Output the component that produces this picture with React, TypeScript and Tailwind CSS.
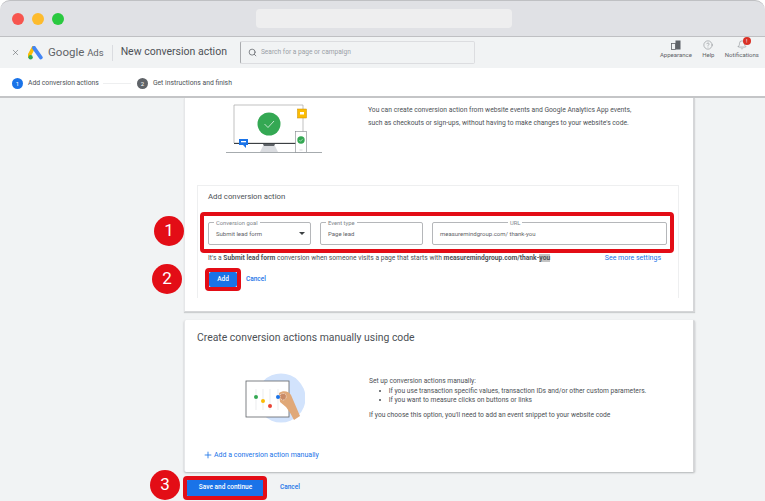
import React from 'react';
import { Search, X, CircleHelp, Bell, Plus } from 'lucide-react';

const font = { fontFamily: 'Roboto, sans-serif' };

function Marker({ n, className }: { n: number; className: string }) {
  return (
    <div className={`absolute flex h-[30px] w-[30px] items-center justify-center rounded-full bg-[#e30d16] text-[17px] text-white ${className}`}>
      {n}
    </div>
  );
}

function Field({ label, value, className, labelClass, caret }: { label: string; value: string; className: string; labelClass: string; caret?: boolean }) {
  return (
    <div className={`relative flex h-[23px] items-center rounded-[2px] border border-[#b5b7ba] pl-[7px] text-[6px] text-[#5f6368] ${className}`}>
      <span className={`absolute top-[-3px] bg-white px-[2px] text-[5.800px] leading-[6px] text-[#80868b] ${labelClass}`}>{label}</span>
      {value}
      {caret && <span className="absolute right-[5px] top-[9px] h-0 w-0 border-x-[3px] border-t-[3px] border-x-transparent border-t-[#3c4043]" />}
    </div>
  );
}

function MonitorArt() {
  return (
    <svg width="100" height="50" viewBox="0 0 100 50" className="shrink-0">
      <path d="M8 1H77V39H8Z" fill="#fff" stroke="#a8a8a8" strokeWidth="0.7" />
      <path d="M8 39.500H70" stroke="#3c4043" strokeWidth="1" />
      <path d="M34 48L38 40H48L52 48Z" fill="#dadce0" />
      <path d="M37 40L38 42H48L49 40Z" fill="#5f6368" />
      <path d="M0 48.500H96" stroke="#80868b" strokeWidth="0.7" />
      <circle cx="43" cy="20" r="11.500" fill="#34a853" />
      <path d="M38.500 20L42 23.500L48 17" fill="none" stroke="#fff" strokeWidth="0.7" />
      <rect x="69.500" y="27.500" width="11" height="21" fill="#fff" stroke="#80868b" strokeWidth="0.6" />
      <circle cx="75" cy="36" r="3.700" fill="#34a853" />
      <path d="M73.300 36L74.500 37.300L76.800 34.800" fill="none" stroke="#fff" strokeWidth="0.5" />
      <path d="M73.500 46H76.500" stroke="#bdc1c6" strokeWidth="0.6" />
      <rect x="71.500" y="5" width="9" height="9" fill="#fbbc04" stroke="#c98d00" strokeWidth="0.5" />
      <rect x="74" y="8" width="4" height="2.500" fill="#fff" />
      <path d="M13 35H22V41H20V44L17 41H13Z" fill="#1a73e8" />
      <rect x="15" y="37" width="5" height="1.300" fill="#fff" />
    </svg>
  );
}

function SliderArt() {
  return (
    <svg width="60" height="52" viewBox="0 0 60 52" className="shrink-0">
      <circle cx="36" cy="25" r="24.500" fill="#d2e3fc" />
      <rect x="1" y="8" width="43" height="36" fill="#fff" stroke="#5f6368" strokeWidth="0.8" />
      <path d="M11 16V37M18 16V37M25 16V37M33 16V37" stroke="#e3e4e6" strokeWidth="0.7" />
      <path d="M34 20C38 17 44 18 46 22L55 43L49 47C46 41 44 38 41 34L35 29Z" fill="#e0a878" />
      <path d="M35 22C37 20 40 20 41 22C42 25 40 27 38 27C36 27 35 25 35 22Z" fill="#c98a66" stroke="#fff" strokeWidth="0.6" strokeDasharray="1 0.8" />
      <circle cx="11" cy="24" r="2" fill="#34a853" />
      <circle cx="18" cy="28" r="2" fill="#fbbc04" />
      <circle cx="25" cy="33" r="2" fill="#ea4335" />
      <circle cx="33" cy="24" r="2" fill="#1a73e8" />
    </svg>
  );
}

export default function App() {
  return (
    <div style={font} className="relative flex h-[501px] w-[765px] flex-col overflow-hidden bg-white">
      {/* Window chrome */}
      <div className="flex h-[37px] shrink-0 items-center rounded-t-[10px] border-y border-[#bfc0c3] bg-[#e0e1e5] pl-[12px]">
        <div className="flex gap-[8px]">
          <span className="h-[12px] w-[12px] rounded-full bg-[#f7554f]" />
          <span className="h-[12px] w-[12px] rounded-full bg-[#fdbb2d]" />
          <span className="h-[12px] w-[12px] rounded-full bg-[#2ac940]" />
        </div>
        <div className="ml-[192px] h-[19px] w-[256px] rounded-[4px] bg-[#eeeeef]" />
      </div>

      {/* Ads header */}
      <div className="flex h-[31px] shrink-0 items-center bg-[#f1f3f4] pl-[11px]">
        <X size={9} strokeWidth={1.5} className="text-[#5f6368]" />
        <svg width="15" height="14" viewBox="0 0 15 14" className="ml-[8px]">
          <path d="M5.500 1.500L1 10" stroke="#fbbc04" strokeWidth="3.600" strokeLinecap="round" />
          <path d="M6 1.800L12.800 11.500" stroke="#4285f4" strokeWidth="3.800" strokeLinecap="round" />
          <circle cx="2.600" cy="11.200" r="2.200" fill="#34a853" />
        </svg>
        <span className="ml-[5px] text-[11.500px] leading-none text-[#5f6368]">Google <span className="text-[9.500px]">Ads</span></span>
        <span className="ml-[8px] h-[16px] w-px bg-[#dadce0]" />
        <span className="ml-[8px] text-[10.500px] leading-none text-[#4d5156]">New conversion action</span>
        <div className="ml-[13px] flex h-[23px] w-[235px] shrink-0 items-center rounded-[2px] border border-[#dcdde0] border-l-[#a9abae] pl-[7px]">
          <Search size={9} className="text-[#5f6368]" />
          <span className="ml-[4px] text-[6.600px] text-[#9aa0a6]">Search for a page or campaign</span>
        </div>
        <div className="ml-[184px] mb-[6px] flex w-[100px] shrink-0 items-start justify-between text-[6px] leading-[8px] text-[#5f6368]">
          <div className="flex flex-col items-center gap-[1px] pl-[1px]">
            <svg width="10" height="10" viewBox="0 0 10 10"><rect x="0.500" y="3.500" width="4" height="6" fill="none" stroke="#5f6368" strokeWidth="0.8" /><rect x="4.500" y="0.500" width="5" height="9" fill="#5f6368" /></svg>
            Appearance
          </div>
          <div className="flex flex-col items-center gap-[1px]">
            <CircleHelp size={10} strokeWidth={1} />
            Help
          </div>
          <div className="relative flex flex-col items-center gap-[1px]">
            <Bell size={10} strokeWidth={1} />
            <span className="absolute left-[18px] top-[-3px] flex h-[8px] w-[8px] items-center justify-center rounded-full bg-[#d93025] text-[5.500px] text-white">!</span>
            Notifications
          </div>
        </div>
      </div>

      {/* Stepper */}
      <div className="flex h-[30px] shrink-0 items-center border-b-2 border-[#c4c5c7] bg-white pl-[12px] pt-[2px] text-[6.800px] text-[#4d5156]">
        <span className="flex h-[11px] w-[11px] items-center justify-center rounded-full bg-[#1a73e8] text-[6px] text-white">1</span>
        <span className="ml-[5px]">Add conversion actions</span>
        <span className="ml-[4px] h-px w-[28px] bg-[#eeeff0]" />
        <span className="ml-[6px] flex h-[11px] w-[11px] items-center justify-center rounded-full bg-[#5f6368] text-[6px] text-white">2</span>
        <span className="ml-[5px]">Get instructions and finish</span>
      </div>

      {/* Page body */}
      <div className="flex flex-1 flex-col bg-[#f1f3f4] pl-[184px]">
        <section className="h-[214px] w-[511px] shrink-0 border-l border-r-2 border-b border-[#d5d6d8] border-l-[#e6e7e9] bg-white pl-[12px] shadow-[0_1px_1px_rgba(60,64,67,0.2)]">
          <div className="flex h-[87px] items-start pl-[29px] pt-[6px]">
            <MonitorArt />
            <p className="ml-[42px] w-[300px] text-[6.750px] leading-[13px] text-[#4d5156]">
              You can create conversion action from website events and Google Analytics App events,<br />
              such as checkouts or sign-ups, without having to make changes to your website's code.
            </p>
          </div>
          <div className="h-[113px] w-[482px] border-x border-t border-[#eeeff0] pl-[10px]">
            <h3 className="mt-[6px] text-[7.800px] leading-[10px] text-[#4d5156]">Add conversion action</h3>
            <div className="mt-[20px] flex w-[459px]">
              <Field label="Conversion goal" value="Submit lead form" className="w-[103px]" labelClass="left-[5px]" caret />
              <Field label="Event type" value="Page lead" className="ml-[9px] w-[103px]" labelClass="left-[5px]" />
              <Field label="URL" value="measuremindgroup.com/ thank-you" className="ml-[9px] w-[235px]" labelClass="left-[75px]" />
            </div>
            <div className="mt-[9px] flex w-[453px] items-center justify-between text-[6.700px] leading-[8px] text-[#4d5156]">
              <span>It's a <b>Submit lead form</b> conversion when someone visits a page that starts with <b>measuremindgroup.com/thank-<span className="bg-[#c4c4c4]">you</span></b></span>
              <span className="text-[7px] text-[#1a73e8]">See more settings</span>
            </div>
            <div className="mt-[10px] flex items-center">
              <button className="ml-px h-[15px] w-[28px] rounded-[2px] bg-[#1a73e8] text-[6.500px] font-medium text-white">Add</button>
              <span className="ml-[9px] text-[6.500px] font-medium text-[#1a73e8]">Cancel</span>
            </div>
          </div>
        </section>

        <section className="mt-[8px] h-[152px] w-[511px] shrink-0 rounded-[2px] border-l border-r-2 border-[#d5d6d8] border-l-[#e6e7e9] bg-white shadow-[0_1px_2px_rgba(60,64,67,0.35)]">
          <h2 className="ml-[12px] mt-[11px] text-[10.400px] leading-[14px] text-[#4d5156]">Create conversion actions manually using code</h2>
          <div className="mt-[28px] flex items-start pl-[60px]">
            <SliderArt />
            <div className="ml-[64px] mt-[4px] text-[6.700px] leading-[9.500px] text-[#4d5156]">
              <p>Set up conversion actions manually:</p>
              <ul className="ml-[10px] list-inside list-disc">
                <li>If you use transaction specific values, transaction IDs and/or other custom parameters.</li>
                <li>If you want to measure clicks on buttons or links</li>
              </ul>
              <p className="mt-[5px]">If you choose this option, you'll need to add an event snippet to your website code</p>
            </div>
          </div>
          <div className="ml-[18px] mt-[25px] flex items-center text-[7px] text-[#1a73e8]">
            <Plus size={10} strokeWidth={2} className="mr-px" />
            Add a conversion action manually
          </div>
        </section>

        <div className="mt-[7px] flex items-center">
          <button className="ml-[3px] h-[18px] w-[77px] rounded-[2px] bg-[#1a73e8] text-[6.500px] font-medium text-white">Save and continue</button>
          <span className="ml-[16px] text-[6.500px] font-medium text-[#1a73e8]">Cancel</span>
        </div>
      </div>

      {/* Red annotations laid over the screenshot */}
      <Marker n={1} className="left-[154px] top-[216px]" />
      <Marker n={2} className="left-[152px] top-[264px]" />
      <Marker n={3} className="left-[150px] top-[470px]" />
      <div className="absolute left-[200px] top-[212px] h-[41px] w-[474px] rounded-[4px] border-4 border-[#e30d16]" />
      <div className="absolute left-[205px] top-[268px] h-[23px] w-[36px] rounded-[4px] border-4 border-[#e30d16]" />
      <div className="absolute left-[183px] top-[476px] h-[24px] w-[84px] rounded-[4px] border-4 border-[#e30d16]" />
    </div>
  );
}
